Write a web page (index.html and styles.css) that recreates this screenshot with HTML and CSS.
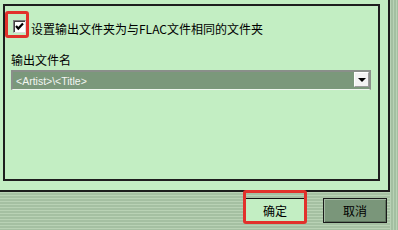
FILE: index.html
```html
<!DOCTYPE html>
<html lang="zh-CN">

<head>
    <meta charset="UTF-8">
    <meta name="viewport" content="width=device-width, initial-scale=1.0">
    <title>输出设置</title>
    <link rel="stylesheet" href="styles.css">
</head>

<body>
    <div class="screen">
        <div class="main">
            <div class="panel">
                <div class="group">
                    <div class="check-row">
                        <span class="mark mark-check">
                            <span class="checkbox">
                                <svg width="11" height="11" viewBox="0 0 11 11">
                                    <path d="M2 5 L4.3 7.6 L9 2.6" fill="none" stroke="#000" stroke-width="2.2" />
                                </svg>
                            </span>
                        </span>
                        <span class="check-label">设置输出文件夹为与FLAC文件相同的文件夹</span>
                    </div>

                    <div class="field-label">输出文件名</div>
                    <div class="combo">
                        <span class="combo-text">&lt;Artist&gt;\&lt;Title&gt;</span>
                        <span class="combo-btn"><span class="arrow"></span></span>
                    </div>
                </div>
            </div>

            <div class="footer">
                <span class="mark mark-ok">
                    <button class="button ok">确定</button>
                </span>
                <button class="button cancel">取消</button>
            </div>
        </div>
        <div class="side"></div>
    </div>
</body>

</html>
```

FILE: styles.css
```css
body {
    margin: 0;
    font-family: "Noto Sans CJK SC", "Liberation Sans", sans-serif;
    font-size: 12px;
    color: #000;
}

.screen {
    display: flex;
    width: 398px;
    height: 230px;
    overflow: hidden;
}

.main {
    width: 390px;
    display: flex;
    flex-direction: column;
}

.side {
    flex: 1;
    background: repeating-linear-gradient(to right, #b9d2b5 0 1.5px, #a4bfa1 1.5px 3px);
}

.panel {
    height: 192px;
    box-sizing: border-box;
    background-color: #c3eec3;
    border-right: 2px solid #1c1c1c;
    border-bottom: 2px solid #1c1c1c;
    padding: 4px 8px 9px 3px;
    display: flex;
}

.group {
    flex: 1;
    border: 2px solid #1e1e1e;
    padding: 5px 7px 0 0;
}

.check-row {
    display: flex;
    align-items: flex-start;
    gap: 2px;
}

.mark {
    border: 3px solid #e2312b;
    border-radius: 3px;
    box-sizing: border-box;
}

.mark-check {
    width: 24px;
    height: 27px;
    padding: 6px 0 0 5px;
}

.checkbox {
    display: flex;
    align-items: center;
    justify-content: center;
    width: 13px;
    height: 13px;
    box-sizing: border-box;
    background-color: #fff;
    border: 1px solid #7c7c7c;
    border-right-color: #dcdcdc;
    border-bottom-color: #dcdcdc;
    box-shadow: inset 1px 1px 0 #404040;
}

.check-label {
    margin-top: 10px;
    line-height: 16px;
}

.field-label {
    margin: 14px 0 0 6px;
    line-height: 16px;
}

.combo {
    margin: 2px 0 0 6px;
    height: 20px;
    box-sizing: border-box;
    background-color: #7b987b;
    border: 2px solid #8a8f8a;
    border-bottom: 1px solid #eef6ee;
    display: flex;
    align-items: center;
}

.combo-text {
    flex: 1;
    padding-left: 3px;
    font-family: "Liberation Sans", sans-serif;
    font-size: 10.5px;
    color: #f2f6f2;
}

.combo-btn {
    align-self: flex-start;
    width: 15px;
    height: 15px;
    box-sizing: border-box;
    background-color: #f3f3f3;
    border: 1px solid #fff;
    border-right-color: #9a9a9a;
    border-bottom-color: #9a9a9a;
    display: flex;
    align-items: center;
    justify-content: center;
}

.arrow {
    width: 0;
    height: 0;
    border-left: 4px solid transparent;
    border-right: 4px solid transparent;
    border-top: 4px solid #000;
    margin-top: 1px;
}

.footer {
    flex: 1;
    background: repeating-linear-gradient(to bottom, #b9d2b5 0 1.5px, #a5c0a2 1.5px 3px);
    display: flex;
    justify-content: flex-end;
    align-items: flex-start;
    gap: 16px;
    padding-right: 3px;
}

.mark-ok {
    width: 64px;
    height: 34px;
    margin-top: -2px;
    padding-top: 5px;
    display: flex;
}

.button {
    font-family: "Noto Sans CJK SC", sans-serif;
    font-size: 12px;
    color: #000;
    padding: 0;
    cursor: pointer;
}

.button.ok {
    flex: 1;
    height: 23px;
    background-color: #c3eec3;
    border: none;
    border-top: 1px solid #111;
}

.button.cancel {
    margin-top: 6px;
    width: 64px;
    height: 25px;
    background-color: #7a967a;
    border: 1px solid #1a1a1a;
    box-shadow: inset 1px 1px 0 #a3baa3, inset -1px -1px 0 #5c735c;
}
```
